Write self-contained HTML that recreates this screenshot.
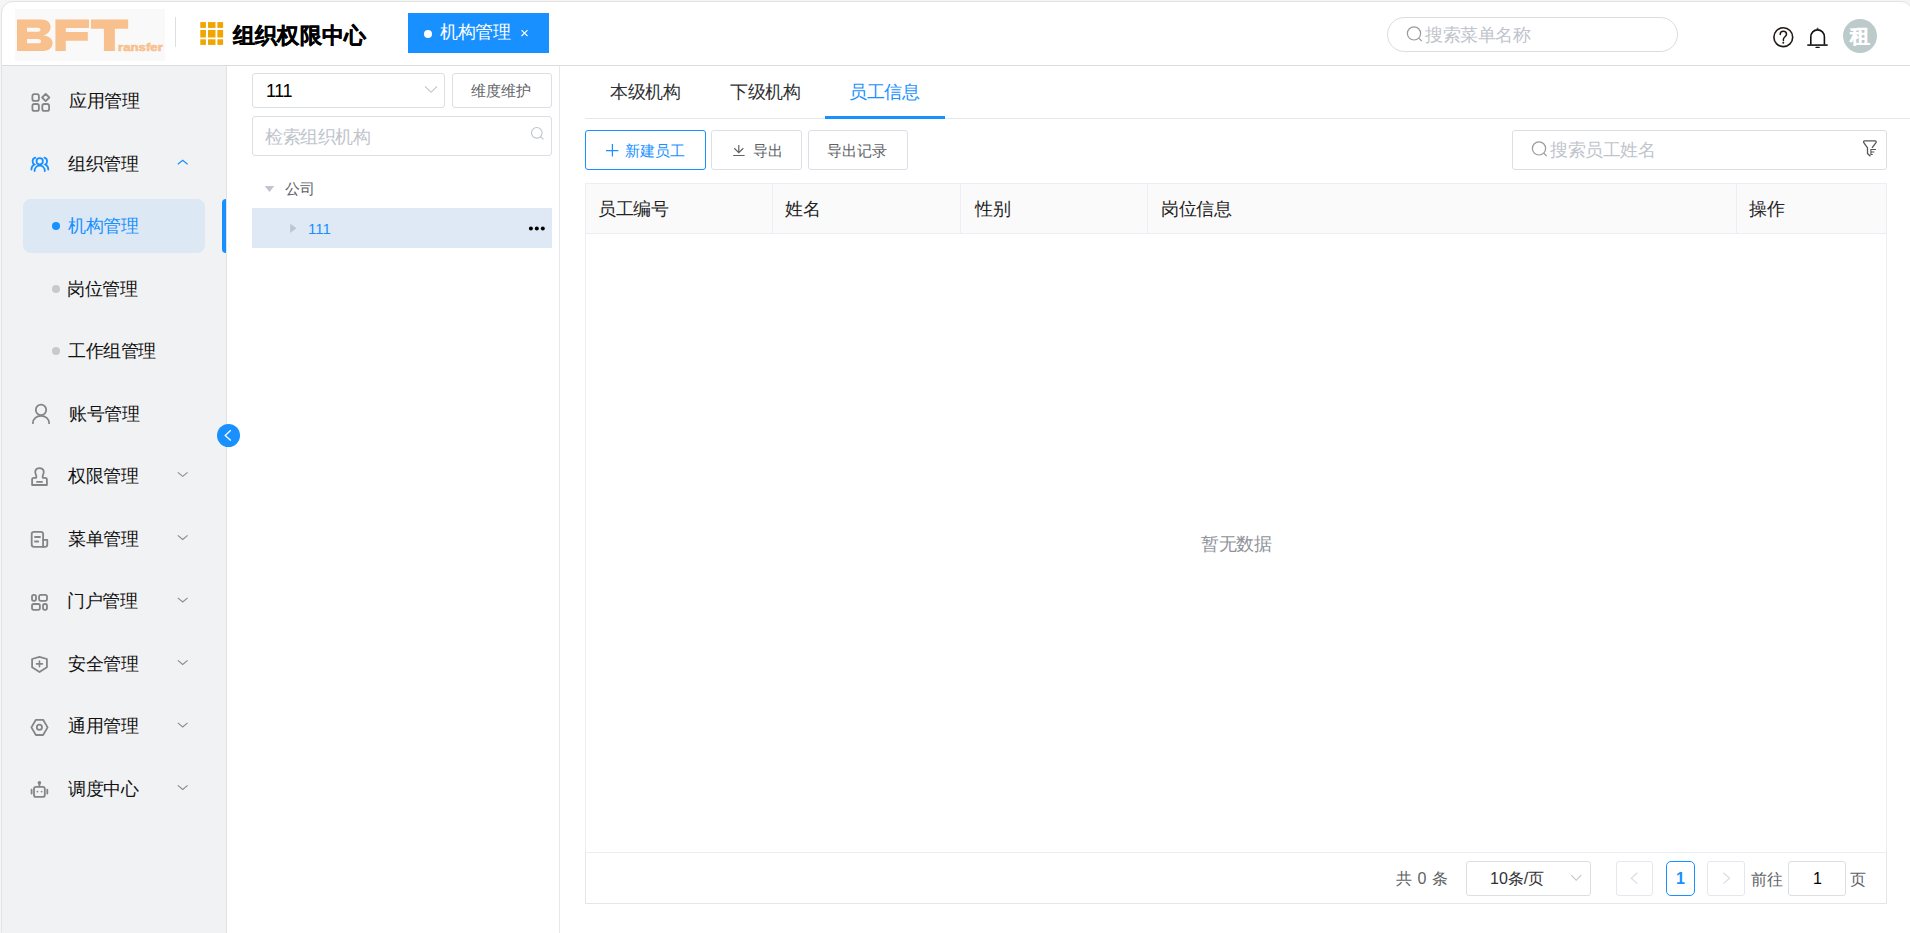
<!DOCTYPE html>
<html><head><meta charset="utf-8">
<style>
html,body{margin:0;padding:0;width:1910px;height:933px;overflow:hidden;background:#f5f5f5;}
body{font-family:"Liberation Sans",sans-serif;position:relative;}
.a{position:absolute;white-space:nowrap;}
.frame{position:absolute;left:1px;top:1px;width:1912px;height:942px;border:1px solid #e3e3e3;border-radius:12px;background:#fff;overflow:hidden;box-sizing:border-box;}
.t18{font-size:18px;line-height:18px;letter-spacing:-0.4px;}
.t15{font-size:15px;line-height:15px;}
.t16{font-size:16px;line-height:16px;}
.box{position:absolute;box-sizing:border-box;}
</style></head><body>
<div class="frame"></div>

<!-- header -->
<div class="box" style="left:2px;top:65px;width:1908px;height:1px;background:#dcdcdc"></div>
<div class="box" style="left:15px;top:9px;width:150px;height:52px;background:#f9f9f9"></div>
<div class="box" style="left:175px;top:17px;width:1px;height:30px;background:#dcdfe6"></div>
<div class="a" style="left:233px;top:25px;font-size:22px;line-height:22px;font-weight:bold;color:#000;letter-spacing:0.2px;-webkit-text-stroke:0.35px #000">组织权限中心</div>
<div class="box" style="left:408px;top:13px;width:141px;height:40px;background:#1890ff"></div>
<div class="box" style="left:424px;top:30px;width:8px;height:8px;border-radius:4px;background:#fff"></div>
<div class="a t18" style="left:440px;top:23px;color:#fff">机构管理</div>
<div class="box" style="left:1387px;top:17px;width:291px;height:35px;border:1px solid #dcdcdc;border-radius:18px"></div>
<div class="a t18" style="left:1425px;top:26px;color:#c0c4cc">搜索菜单名称</div>
<div class="box" style="left:1843px;top:19px;width:34px;height:34px;border-radius:17px;background:#bccacb"></div>
<div class="a" style="left:1850px;top:26px;font-size:20px;line-height:20px;font-weight:bold;color:#fff;-webkit-text-stroke:0.4px #fff">租</div>

<!-- sidebar -->
<div class="box" style="left:2px;top:66px;width:224px;height:876px;background:#f1f2f4;border-bottom-left-radius:11px"></div>
<div class="box" style="left:226px;top:66px;width:1px;height:870px;background:#e2e2e2"></div>
<div class="a t18" style="left:69px;top:92px;color:#111">应用管理</div>
<div class="a t18" style="left:68px;top:155px;color:#111">组织管理</div>
<div class="box" style="left:23px;top:199px;width:182px;height:54px;border-radius:8px;background:#dde8f5"></div>
<div class="box" style="left:222px;top:199px;width:4px;height:54px;border-radius:4px 0 0 4px;background:#1890ff"></div>
<div class="box" style="left:52px;top:222px;width:8px;height:8px;border-radius:4px;background:#1890ff"></div>
<div class="a t18" style="left:68px;top:217px;color:#1890ff">机构管理</div>
<div class="box" style="left:52px;top:285px;width:8px;height:8px;border-radius:4px;background:#c8c9cc"></div>
<div class="a t18" style="left:67px;top:280px;color:#111">岗位管理</div>
<div class="box" style="left:52px;top:347px;width:8px;height:8px;border-radius:4px;background:#c8c9cc"></div>
<div class="a t18" style="left:68px;top:342px;color:#111">工作组管理</div>
<div class="a t18" style="left:69px;top:405px;color:#111">账号管理</div>
<div class="a t18" style="left:68px;top:467px;color:#111">权限管理</div>
<div class="a t18" style="left:68px;top:530px;color:#111">菜单管理</div>
<div class="a t18" style="left:67px;top:592px;color:#111">门户管理</div>
<div class="a t18" style="left:68px;top:655px;color:#111">安全管理</div>
<div class="a t18" style="left:68px;top:717px;color:#111">通用管理</div>
<div class="a t18" style="left:68px;top:780px;color:#111">调度中心</div>

<!-- tree panel -->
<div class="box" style="left:559px;top:66px;width:1px;height:870px;background:#e4e7ed"></div>
<div class="box" style="left:252px;top:73px;width:193px;height:35px;border:1px solid #dcdfe0;border-radius:3px"></div>
<div class="a t18" style="left:266px;top:82px;color:#000">111</div>
<div class="box" style="left:452px;top:73px;width:100px;height:35px;border:1px solid #dcdfe0;border-radius:3px"></div>
<div class="a t15" style="left:471px;top:83px;color:#606266">维度维护</div>
<div class="box" style="left:252px;top:116px;width:300px;height:40px;border:1px solid #dcdfe0;border-radius:3px"></div>
<div class="a t18" style="left:265px;top:128px;color:#c0c4cc">检索组织机构</div>
<div class="a t15" style="left:285px;top:181px;color:#606266">公司</div>
<div class="box" style="left:252px;top:208px;width:300px;height:40px;background:#dfe9f5"></div>
<div class="a t15" style="left:308px;top:221px;color:#1890ff">111</div>

<!-- main -->
<div class="box" style="left:585px;top:118px;width:1325px;height:1px;background:#e4e7ed"></div>
<div class="a t18" style="left:610px;top:83px;color:#303133">本级机构</div>
<div class="a t18" style="left:730px;top:83px;color:#303133">下级机构</div>
<div class="a t18" style="left:849px;top:83px;color:#1890ff">员工信息</div>
<div class="box" style="left:825px;top:116px;width:120px;height:3px;background:#1890ff"></div>

<div class="box" style="left:585px;top:130px;width:121px;height:40px;border:1px solid #1890ff;border-radius:3px"></div>
<div class="a t15" style="left:625px;top:143px;color:#1890ff">新建员工</div>
<div class="box" style="left:711px;top:130px;width:91px;height:40px;border:1px solid #dcdfe6;border-radius:3px"></div>
<div class="a t15" style="left:753px;top:143px;color:#606266">导出</div>
<div class="box" style="left:808px;top:130px;width:100px;height:40px;border:1px solid #dcdfe6;border-radius:3px"></div>
<div class="a t15" style="left:827px;top:143px;color:#606266">导出记录</div>

<div class="box" style="left:1512px;top:130px;width:375px;height:40px;border:1px solid #dcdfe0;border-radius:3px"></div>
<div class="a t18" style="left:1550px;top:141px;color:#c0c4cc">搜索员工姓名</div>

<!-- table -->
<div class="box" style="left:585px;top:183px;width:1302px;height:670px;border:1px solid #ebeef5"></div>
<div class="box" style="left:585px;top:853px;width:1302px;height:51px;border:1px solid #e6e6e6;border-top:none"></div>
<div class="box" style="left:586px;top:184px;width:1300px;height:50px;background:#fafafa;border-bottom:1px solid #ebeef5"></div>
<div class="box" style="left:772px;top:184px;width:1px;height:49px;background:#ebeef5"></div>
<div class="box" style="left:960px;top:184px;width:1px;height:49px;background:#ebeef5"></div>
<div class="box" style="left:1147px;top:184px;width:1px;height:49px;background:#ebeef5"></div>
<div class="box" style="left:1736px;top:184px;width:1px;height:49px;background:#ebeef5"></div>
<div class="a t18" style="left:598px;top:200px;color:#222">员工编号</div>
<div class="a t18" style="left:785px;top:200px;color:#222">姓名</div>
<div class="a t18" style="left:975px;top:200px;color:#222">性别</div>
<div class="a t18" style="left:1161px;top:200px;color:#222">岗位信息</div>
<div class="a t18" style="left:1749px;top:200px;color:#222">操作</div>
<div class="a t18" style="left:1201px;top:535px;color:#909399">暂无数据</div>

<!-- pagination -->
<div class="box" style="left:586px;top:852px;width:1300px;height:1px;background:#ebeef5"></div>
<div class="a t16" style="left:1396px;top:871px;color:#606266;word-spacing:1px">共 0 条</div>
<div class="box" style="left:1466px;top:861px;width:125px;height:35px;border:1px solid #dcdfe0;border-radius:3px"></div>
<div class="a t16" style="left:1490px;top:871px;color:#303133">10条/页</div>
<div class="box" style="left:1616px;top:861px;width:37px;height:35px;border:1px solid #e4e7ed;border-radius:3px"></div>
<div class="box" style="left:1666px;top:861px;width:29px;height:35px;border:1px solid #1890ff;border-radius:5px"></div>
<div class="a t16" style="left:1676px;top:871px;color:#1890ff;font-weight:bold">1</div>
<div class="box" style="left:1707px;top:861px;width:38px;height:35px;border:1px solid #e4e7ed;border-radius:3px"></div>
<div class="a t16" style="left:1751px;top:872px;color:#606266">前往</div>
<div class="box" style="left:1788px;top:861px;width:58px;height:35px;border:1px solid #dcdfe0;border-radius:3px"></div>
<div class="a t16" style="left:1813px;top:871px;color:#000">1</div>
<div class="a t16" style="left:1850px;top:872px;color:#606266">页</div>

<!-- collapse button -->
<div class="box" style="left:217px;top:424px;width:23px;height:23px;border-radius:12px;background:#1890ff"></div>

<!-- icons overlay -->
<svg class="a" style="left:0;top:0" width="1910" height="933" viewBox="0 0 1910 933" fill="none">
<!-- logo -->
<g fill="#f8c08c">
<path fill-rule="evenodd" d="M17,19.6 H41 C47.5,19.6 50.6,22.6 50.6,27 C50.6,31 47.8,34.2 43.2,35.6 C49,36.2 52.6,39 52.6,43 C52.6,48.2 48.4,51.1 41.5,51.1 H17 Z M27,27.7 H37.6 C39.6,27.7 40.5,28.6 40.5,29.7 C40.5,30.8 39.6,31.7 37.6,31.7 H27 Z M27,39 H38 C40.1,39 41,40 41,41.15 C41,42.3 40.1,43.3 38,43.3 H27 Z"/>
<path d="M55.4,19.6 H89 V28 H65.8 V32 H87.8 V40.7 H65.8 V51.1 H55.4 Z"/>
<path d="M90.9,19.6 H128.2 V28.8 H114.9 V51.1 H103.9 V28.8 H90.9 Z"/>
<text x="118.1" y="51.2" font-family="Liberation Sans" font-weight="bold" font-size="10.6" stroke="#f8c08c" stroke-width="0.55" textLength="44.7" lengthAdjust="spacingAndGlyphs">ransfer</text>
</g>
<!-- grid icon -->
<g fill="#f0a500">
<rect x="200.3" y="22.1" width="5.6" height="5.8"/><rect x="208" y="22.1" width="7.5" height="5.8"/><rect x="217.4" y="22.1" width="5.7" height="5.8"/>
<rect x="200.3" y="30" width="5.6" height="7.5"/><rect x="208" y="30" width="7.5" height="7.5"/><rect x="217.4" y="30" width="5.7" height="7.5"/>
<rect x="200.3" y="39.3" width="5.6" height="5.6"/><rect x="208" y="39.3" width="7.5" height="5.6"/><rect x="217.4" y="39.3" width="5.7" height="5.6"/>
</g>
<!-- tab close -->
<path d="M521.5,30.2 L527.5,36 M527.5,30.2 L521.5,36" stroke="#fff" stroke-width="1.1"/>
<!-- header search icon -->
<circle cx="1414" cy="33.4" r="6.6" stroke="#9a9a9a" stroke-width="1.2"/>
<path d="M1418.8,38.2 L1421.8,41.2" stroke="#9a9a9a" stroke-width="1.2"/>
<!-- help -->
<circle cx="1783.3" cy="37.2" r="9.4" stroke="#231815" stroke-width="1.6"/>
<path d="M1780.2,34.5 C1780.2,32.4 1781.6,31.3 1783.3,31.3 C1785.1,31.3 1786.5,32.5 1786.5,34.2 C1786.5,36.4 1783.6,36.9 1783.4,39.2 V40.6" stroke="#231815" stroke-width="1.5" stroke-linecap="round"/>
<circle cx="1783.3" cy="42.7" r="0.95" fill="#231815"/>
<!-- bell -->
<path d="M1810.8,44.8 V37 C1810.8,32.8 1813.8,29.9 1817.6,29.9 C1821.4,29.9 1824.4,32.8 1824.4,37 V44.8" stroke="#111" stroke-width="1.6"/>
<path d="M1807.3,45.1 H1827.7" stroke="#222" stroke-width="1.7"/>
<path d="M1816.3,28.8 L1817.6,27.6 L1818.9,28.8 Z" fill="#111"/>
<path d="M1816,47.4 H1819.2" stroke="#111" stroke-width="1.2" stroke-linecap="round"/>

<!-- sidebar icons -->
<g stroke="#858585" stroke-width="1.8" stroke-linejoin="round" stroke-linecap="round">
 <!-- app -->
 <rect x="32.4" y="94.2" width="6.5" height="6.7" rx="2"/>
 <path d="M45.7,93.9 L49.3,97.5 L45.7,101.1 L42.1,97.5 Z"/>
 <rect x="32.4" y="104" width="6.5" height="6.9" rx="2"/>
 <rect x="42.3" y="104" width="6.8" height="6.9" rx="2"/>
 <!-- account -->
 <circle cx="41" cy="409.9" r="5.2"/>
 <path d="M32.9,423.2 C32.9,418.8 36.5,415.9 41,415.9 C45.5,415.9 49.1,418.8 49.1,423.2"/>
 <!-- stamp -->
 <path d="M36.2,477.9 C36.6,476 36,474.5 35.5,473.4 C35.1,472.4 35.2,471.4 35.4,470.8 C36,469 37.6,468.2 39.5,468.2 C41.4,468.2 43,469 43.6,470.8 C43.8,471.4 43.9,472.4 43.5,473.4 C43,474.5 42.4,476 42.8,477.9 H45.2 C46.2,477.9 46.9,478.6 46.9,479.6 V485 H32.1 V479.6 C32.1,478.6 32.8,477.9 33.8,477.9 Z"/>
 <path d="M37,481.9 H42" />
 <!-- menu -->
 <path d="M43.2,546.9 H34 C32.6,546.9 31.7,546 31.7,544.6 V534.1 C31.7,532.7 32.6,531.8 34,531.8 H40.8 C42.2,531.8 43.1,532.7 43.1,534.1 V546.9"/>
 <path d="M43.1,539.9 H47.3 V544.6 C47.3,546 46.4,546.9 45,546.9 H43.1"/>
 <path d="M35,537 H40" /><path d="M35,541.5 H38.2"/>
 <!-- portal -->
 <rect x="32" y="594.8" width="4" height="6.1" rx="1.8"/>
 <rect x="39.1" y="594.8" width="7.9" height="6.1" rx="1.8"/>
 <rect x="32" y="604" width="7.9" height="5.9" rx="1.8"/>
 <rect x="43" y="604" width="4" height="5.9" rx="1.8"/>
 <!-- shield -->
 <path d="M39.5,656.8 L46.9,659 V667.3 L39.5,672.1 L32.1,667.3 V659 Z"/>
 <path d="M36.6,663.9 H42.4 M39.5,661 V666.8" stroke-width="1.6"/>
 <!-- hex -->
 <path d="M35.9,719.8 H43.1 L47.6,727.4 L43.1,735 H35.9 L31.4,727.4 Z"/>
 <circle cx="39.4" cy="727.3" r="2.6" />
 <!-- robot -->
 <rect x="34" y="786.8" width="10.8" height="10.1" rx="2"/>
 <path d="M39.4,786.3 V784.3"/>
 <path d="M31.6,789.6 V793.6 M47.3,789.6 V793.6"/>
</g>
<circle cx="39.4" cy="782.7" r="1.8" fill="#858585"/>
<circle cx="37.4" cy="791.6" r="0.9" fill="#858585"/>
<circle cx="41.6" cy="791.6" r="0.9" fill="#858585"/>
<!-- org icon (blue) -->
<g stroke="#1890ff" stroke-width="1.8" stroke-linecap="round" fill="none">
 <circle cx="39.7" cy="161.3" r="3.2"/>
 <path d="M34.6,171 C34.6,167.8 36.9,165.5 39.7,165.5 C42.5,165.5 44.8,167.8 44.8,171"/>
 <path d="M35.3,157.7 C33.6,158.2 32.6,159.6 32.6,161.3 C32.6,162.8 33.3,163.9 34.4,164.5 C32.4,165.5 31.4,167.3 31.4,169.5"/>
 <path d="M44.4,157.7 C46.1,158.2 47.1,159.6 47.1,161.3 C47.1,162.8 46.4,163.9 45.3,164.5 C47.3,165.5 48.3,167.3 48.3,169.5"/>
</g>
<!-- sidebar chevrons -->
<path d="M177.8,164.3 L182.7,160.3 L187.6,164.3" stroke="#1890ff" stroke-width="1.2"/>
<g stroke="#8a8a8a" stroke-width="1.1">
 <path d="M177.8,472.3 L182.7,476.4 L187.6,472.3"/>
 <path d="M177.8,535.4 L182.7,539.5 L187.6,535.4"/>
 <path d="M177.8,597.9 L182.7,602 L187.6,597.9"/>
 <path d="M177.8,660.4 L182.7,664.5 L187.6,660.4"/>
 <path d="M177.8,722.9 L182.7,727 L187.6,722.9"/>
 <path d="M177.8,785.4 L182.7,789.5 L187.6,785.4"/>
</g>
<!-- collapse chevron -->
<path d="M230.8,430.3 L225.2,435.4 L230.8,440.6" stroke="#fff" stroke-width="1.3"/>

<!-- tree panel icons -->
<path d="M425,86.3 L431,92.3 L437,86.3" stroke="#c0c4cc" stroke-width="1.1"/>
<circle cx="536.8" cy="132.8" r="5.3" stroke="#c0c4cc" stroke-width="1.1"/>
<path d="M540.6,136.6 L543.4,139.4" stroke="#c0c4cc" stroke-width="1.1"/>
<path d="M264.7,185.9 H274.3 L269.5,191.9 Z" fill="#c0c4cc"/>
<path d="M290.2,223.7 L296.5,228.3 L290.2,232.9 Z" fill="#c0c4cc"/>
<circle cx="530.9" cy="228.4" r="2" fill="#000"/>
<circle cx="536.8" cy="228.4" r="2" fill="#000"/>
<circle cx="542.8" cy="228.4" r="2" fill="#000"/>

<!-- buttons icons -->
<path d="M612.4,144.1 V156.4 M606,150.6 H618.4" stroke="#1890ff" stroke-width="1.2"/>
<path d="M738.8,144.9 V152.2 M734.3,148.3 L738.8,152.6 L743.3,148.3 M733.2,155.5 H744.6" stroke="#606266" stroke-width="1.2"/>
<!-- emp search icon -->
<circle cx="1539" cy="148.4" r="6.6" stroke="#9a9a9a" stroke-width="1.2"/>
<path d="M1543.8,153.2 L1546.6,156.2" stroke="#9a9a9a" stroke-width="1.2"/>
<!-- filter -->
<path d="M1872,147.8 L1876,142.6 C1876.5,141.8 1876.1,140.8 1875.2,140.8 H1864.6 C1863.7,140.8 1863.2,141.8 1863.8,142.6 L1867.5,147.8 V153.6 L1870.4,156.3" stroke="#555" stroke-width="1.3" stroke-linejoin="round"/>
<path d="M1870.4,149.5 H1876 M1870.4,152 H1874.4 M1870.4,154.5 H1872.8 M1870.9,149.5 V154.5" stroke="#555" stroke-width="1.1"/>

<!-- pagination icons -->
<path d="M1571.3,875.2 L1576.2,880.3 L1581.1,875.2" stroke="#c0c4cc" stroke-width="1.1"/>
<path d="M1637.3,872.8 L1631.3,878.2 L1637.3,883.6" stroke="#dadde3" stroke-width="1.2"/>
<path d="M1723.3,872.8 L1729.6,878.2 L1723.3,883.6" stroke="#dadde3" stroke-width="1.2"/>
</svg>
</body></html>
